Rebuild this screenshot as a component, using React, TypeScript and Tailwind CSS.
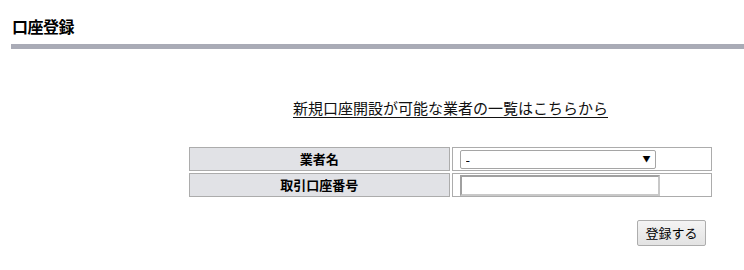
export default function App() {
  return (
    <main
      className="w-[744px] h-[270px] bg-white text-black overflow-hidden"
      style={{ fontFamily: '"Noto Sans CJK JP", "Noto Sans", sans-serif' }}
    >
      <header className="pl-[12px] pt-[16px]">
        <h1 className="text-[16px] leading-[20px] font-bold tracking-[-0.5px]">口座登録</h1>
      </header>
      <div className="ml-[11px] mt-[8px] h-[5px] bg-[#a9abb6]" />

      <section className="pl-[187px] pr-[30px] pt-[48px]">
        <p className="text-center text-[15px] leading-[22px]">
          <a href="#" className="underline underline-offset-[3px] text-[#111]">
            新規口座開設が可能な業者の一覧はこちらから
          </a>
        </p>

        <table className="mt-[26px] w-full border-separate border-spacing-[2px] text-[13px]">
          <tbody>
            <tr>
              <th className="w-1/2 h-[24px] p-0 border border-[#acacac] bg-[#e1e2e6] font-bold text-center leading-[20px]">
                業者名
              </th>
              <td className="w-1/2 h-[24px] p-0 pl-[7px] border border-[#acacac]">
                <div className="relative w-[196px] h-[19px]">
                  <select className="appearance-none w-full h-full border border-[#a5a5a5] rounded-[2px] bg-white pl-[5px] text-[13px] leading-[17px] outline-none">
                    <option>-</option>
                  </select>
                  <span className="pointer-events-none absolute right-[5px] top-[2px] text-[8px] leading-[14px]">▼</span>
                </div>
              </td>
            </tr>
            <tr>
              <th className="h-[24px] p-0 border border-[#acacac] bg-[#e1e2e6] font-bold text-center leading-[20px]">
                取引口座番号
              </th>
              <td className="h-[24px] p-0 pl-[7px] border border-[#acacac] align-bottom">
                <input
                  type="text"
                  className="block w-[200px] h-[21px] border-2 border-t-[#a0a0a0] border-l-[#a0a0a0] border-r-[#c8c8c8] border-b-[#c8c8c8] bg-white outline-none"
                />
              </td>
            </tr>
          </tbody>
        </table>

        <div className="flex justify-end pr-[8px] mt-[21px]">
          <button
            type="button"
            className="w-[69px] h-[26px] border border-[#adadad] rounded-[2px] bg-gradient-to-b from-[#f4f4f4] to-[#e3e3e3] text-[13px] leading-[20px]"
          >
            登録する
          </button>
        </div>
      </section>
    </main>
  )
}
